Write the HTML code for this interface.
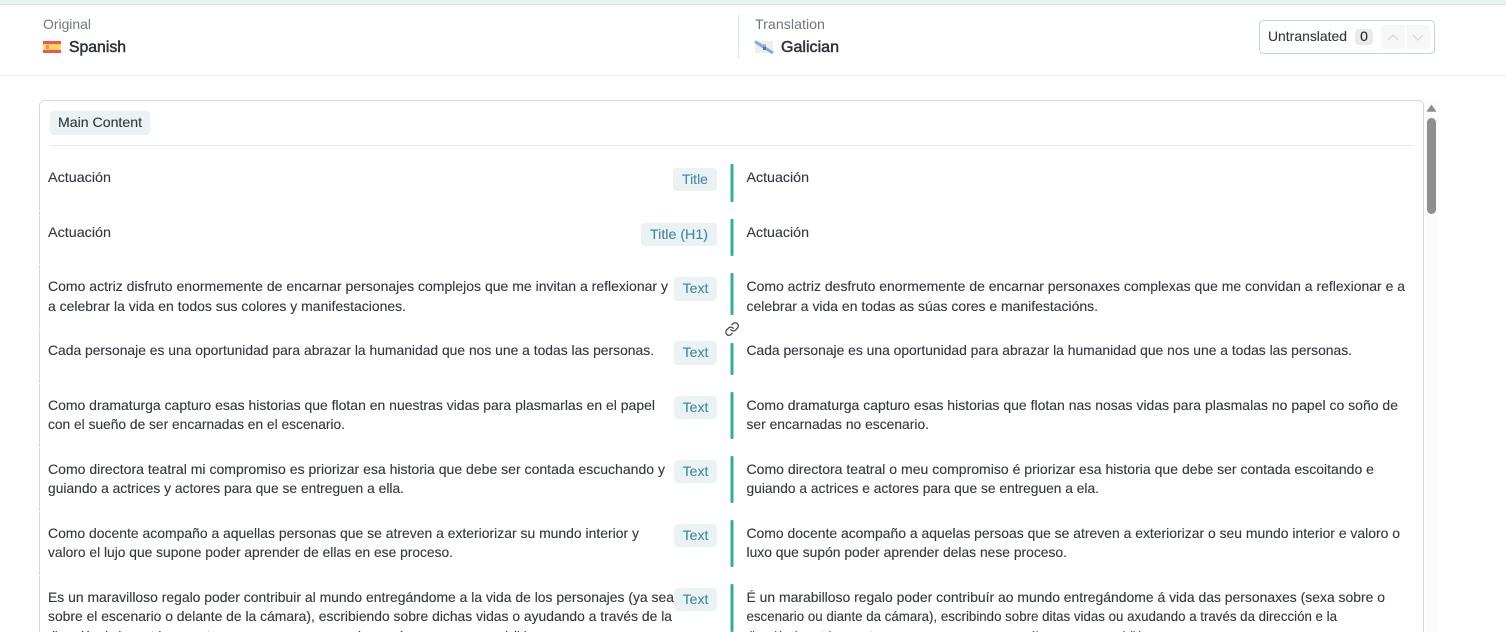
<!DOCTYPE html>
<html><head><meta charset="utf-8"><style>
html,body{margin:0;padding:0;background:#fff;width:1506px;height:632px;overflow:hidden}
svg{display:block}
text{font-family:"Liberation Sans",Arial,sans-serif;font-size:14px;fill:#33383e;stroke:#33383e;stroke-width:.12px}
.p{fill:#ebf2f4}
text.t{fill:#44889f;stroke:#44889f;text-anchor:middle}
.g{fill:#33ae98}
text.m{font-size:16px;fill:#2f343a;stroke:#2f343a;stroke-width:.5px}
text.l{fill:#6f7780;stroke:none}
</style></head><body>
<svg width="1506" height="632" viewBox="0 0 1506 632" xmlns="http://www.w3.org/2000/svg">
<rect width="1506" height="4" fill="#e8f1f4"/><rect y="4" width="1506" height="1" fill="#d3e5ea"/>
<rect y="75" width="1506" height="1" fill="#ebf2f2"/>
<text class="l" x="43" y="29" textLength="48" lengthAdjust="spacingAndGlyphs">Original</text>
<rect x="43" y="41" width="18" height="12" fill="#f65058"/><rect x="43" y="44" width="18" height="6" fill="#fbd95b"/><rect x="46" y="45" width="3" height="4" fill="#f0916a"/>
<text class="m" x="69" y="52" textLength="57" lengthAdjust="spacingAndGlyphs">Spanish</text>
<rect x="738" y="15" width="1" height="44" fill="#d8e8ee"/>
<text class="l" x="755" y="29" textLength="70" lengthAdjust="spacingAndGlyphs">Translation</text>
<rect x="755" y="41" width="18" height="12" fill="#efefef"/><path d="M755 41.5L773 53" stroke="#7aaee8" stroke-width="3"/><rect x="763" y="44" width="3" height="2.5" fill="#ee9fb5"/><rect x="763" y="46.5" width="3" height="3.5" fill="#4a7ab0"/>
<text class="m" x="781" y="52" textLength="58" lengthAdjust="spacingAndGlyphs">Galician</text>
<rect x="1259.5" y="20.5" width="175" height="33" rx="4" fill="#fff" stroke="#b9d8e0"/>
<text x="1268" y="41" textLength="79" lengthAdjust="spacingAndGlyphs">Untranslated</text>
<rect x="1355" y="29" width="18" height="16" rx="4" fill="#ebebeb"/>
<text x="1364" y="41" text-anchor="middle" style="fill:#222">0</text>
<path d="M1384 25h21v24h-21a3 3 0 0 1-3-3v-18a3 3 0 0 1 3-3zM1406 25h21a3 3 0 0 1 3 3v18a3 3 0 0 1-3 3h-21z" fill="#f7f7f7"/>
<path d="M1388 40l5-5 5 5M1413 35l5 5 5-5" fill="none" stroke="#d5d5d5" stroke-width="1.2"/>
<rect x="1425" y="100" width="14" height="532" fill="#fbfbfb"/>
<path d="M1431.500 105l4.500 6.500h-9z" fill="#8c8c8c" stroke="#8c8c8c" stroke-width=".6" stroke-linejoin="round"/>
<rect x="1427" y="118" width="9" height="96" rx="4.500" fill="#8f8f8f"/>
<path d="M39.500 632V105.500a5 5 0 0 1 5-5H1418.500a5 5 0 0 1 5 5V632" fill="#fff" stroke="#d9d9d9"/>
<rect x="38" y="210" width="3" height="1" fill="#fff"/><rect x="38" y="264" width="3" height="1" fill="#fff"/><rect x="38" y="329" width="3" height="1" fill="#fff"/><rect x="38" y="383" width="3" height="1" fill="#fff"/><rect x="38" y="447" width="3" height="1" fill="#fff"/><rect x="38" y="511" width="3" height="1" fill="#fff"/><rect x="38" y="575" width="3" height="1" fill="#fff"/>
<rect x="50" y="111" width="100" height="24" rx="4" class="p"/>
<text x="58" y="127" textLength="84" lengthAdjust="spacingAndGlyphs">Main Content</text>
<rect x="50" y="145" width="1363" height="1" fill="#e8e8e8"/>

<rect x="673" y="168" width="44" height="23" rx="4" class="p"/><text class="t" x="695" y="184">Title</text>
<rect x="641" y="223" width="76" height="23" rx="4" class="p"/><text class="t" x="679" y="239" textLength="58" lengthAdjust="spacingAndGlyphs">Title (H1)</text>
<rect x="674" y="277" width="43" height="24" rx="4" class="p"/><text class="t" x="695.500" y="293">Text</text>
<rect x="674" y="341" width="43" height="24" rx="4" class="p"/><text class="t" x="695.500" y="357">Text</text>
<rect x="674" y="396" width="43" height="23" rx="4" class="p"/><text class="t" x="695.500" y="412">Text</text>
<rect x="674" y="460" width="43" height="23" rx="4" class="p"/><text class="t" x="695.500" y="476">Text</text>
<rect x="674" y="524" width="43" height="23" rx="4" class="p"/><text class="t" x="695.500" y="540">Text</text>
<rect x="674" y="588" width="43" height="23" rx="4" class="p"/><text class="t" x="695.500" y="604">Text</text>

<rect class="g" x="730.500" y="164" width="3" height="38" rx="1"/>
<rect class="g" x="730.500" y="219" width="3" height="37" rx="1"/>
<rect class="g" x="730.500" y="273" width="3" height="42" rx="1"/>
<rect class="g" x="730.500" y="343" width="3" height="32" rx="1"/>
<rect class="g" x="730.500" y="392" width="3" height="47" rx="1"/>
<rect class="g" x="730.500" y="456" width="3" height="47" rx="1"/>
<rect class="g" x="730.500" y="520" width="3" height="47" rx="1"/>
<rect class="g" x="730.500" y="584" width="3" height="48" rx="1"/>

<g transform="translate(724.500 321.500) scale(.63)" fill="none" stroke="#3f4449" stroke-width="2" stroke-linecap="round" stroke-linejoin="round"><path d="M10 13a5 5 0 0 0 7.540.54l3-3a5 5 0 0 0-7.070-7.070l-1.720 1.710"/><path d="M14 11a5 5 0 0 0-7.540-.54l-3 3a5 5 0 0 0 7.070 7.070l1.710-1.710"/></g>

<text x="48" y="182" textLength="63" lengthAdjust="spacingAndGlyphs">Actuación</text>
<text x="48" y="237" textLength="63" lengthAdjust="spacingAndGlyphs">Actuación</text>
<text x="48" y="291" textLength="620" lengthAdjust="spacingAndGlyphs">Como actriz disfruto enormemente de encarnar personajes complejos que me invitan a reflexionar y</text>
<text x="48" y="311" textLength="358" lengthAdjust="spacingAndGlyphs">a celebrar la vida en todos sus colores y manifestaciones.</text>
<text x="48" y="355" textLength="606" lengthAdjust="spacingAndGlyphs">Cada personaje es una oportunidad para abrazar la humanidad que nos une a todas las personas.</text>
<text x="48" y="410" textLength="607" lengthAdjust="spacingAndGlyphs">Como dramaturga capturo esas historias que flotan en nuestras vidas para plasmarlas en el papel</text>
<text x="48" y="429" textLength="297" lengthAdjust="spacingAndGlyphs">con el sueño de ser encarnadas en el escenario.</text>
<text x="48" y="474" textLength="617" lengthAdjust="spacingAndGlyphs">Como directora teatral mi compromiso es priorizar esa historia que debe ser contada escuchando y</text>
<text x="48" y="493" textLength="356" lengthAdjust="spacingAndGlyphs">guiando a actrices y actores para que se entreguen a ella.</text>
<text x="48" y="538" textLength="591" lengthAdjust="spacingAndGlyphs">Como docente acompaño a aquellas personas que se atreven a exteriorizar su mundo interior y</text>
<text x="48" y="557" textLength="405" lengthAdjust="spacingAndGlyphs">valoro el lujo que supone poder aprender de ellas en ese proceso.</text>
<text x="48" y="602" textLength="626" lengthAdjust="spacingAndGlyphs">Es un maravilloso regalo poder contribuir al mundo entregándome a la vida de los personajes (ya sea</text>
<text x="48" y="621" textLength="624" lengthAdjust="spacingAndGlyphs">sobre el escenario o delante de la cámara), escribiendo sobre dichas vidas o ayudando a través de la</text>
<text x="48" y="641" textLength="556" lengthAdjust="spacingAndGlyphs">dirección de las actrices y actores para que sus personajes y más personas sean visibles en escena.</text>

<text x="746.500" y="182" textLength="62.500" lengthAdjust="spacingAndGlyphs">Actuación</text>
<text x="746.500" y="237" textLength="62.500" lengthAdjust="spacingAndGlyphs">Actuación</text>
<text x="746.500" y="291" textLength="658.500" lengthAdjust="spacingAndGlyphs">Como actriz desfruto enormemente de encarnar personaxes complexas que me convidan a reflexionar e a</text>
<text x="746.500" y="311" textLength="351.500" lengthAdjust="spacingAndGlyphs">celebrar a vida en todas as súas cores e manifestacións.</text>
<text x="746.500" y="355" textLength="605.500" lengthAdjust="spacingAndGlyphs">Cada personaje es una oportunidad para abrazar la humanidad que nos une a todas las personas.</text>
<text x="746.500" y="410" textLength="651.500" lengthAdjust="spacingAndGlyphs">Como dramaturga capturo esas historias que flotan nas nosas vidas para plasmalas no papel co soño de</text>
<text x="746.500" y="429" textLength="182.500" lengthAdjust="spacingAndGlyphs">ser encarnadas no escenario.</text>
<text x="746.500" y="474" textLength="627.500" lengthAdjust="spacingAndGlyphs">Como directora teatral o meu compromiso é priorizar esa historia que debe ser contada escoitando e</text>
<text x="746.500" y="493" textLength="352.500" lengthAdjust="spacingAndGlyphs">guiando a actrices e actores para que se entreguen a ela.</text>
<text x="746.500" y="538" textLength="653.500" lengthAdjust="spacingAndGlyphs">Como docente acompaño a aquelas persoas que se atreven a exteriorizar o seu mundo interior e valoro o</text>
<text x="746.500" y="557" textLength="320.500" lengthAdjust="spacingAndGlyphs">luxo que supón poder aprender delas nese proceso.</text>
<text x="746.500" y="602" textLength="638.500" lengthAdjust="spacingAndGlyphs">É un marabilloso regalo poder contribuír ao mundo entregándome á vida das personaxes (sexa sobre o</text>
<text x="746.500" y="621" textLength="590.500" lengthAdjust="spacingAndGlyphs">escenario ou diante da cámara), escribindo sobre ditas vidas ou axudando a través da dirección e la</text>
<text x="746.500" y="641" textLength="460" lengthAdjust="spacingAndGlyphs">dirección das actrices e actores para que as personaxes e máis persoas sexan visibles en escena.</text>
</svg>
</body></html>
